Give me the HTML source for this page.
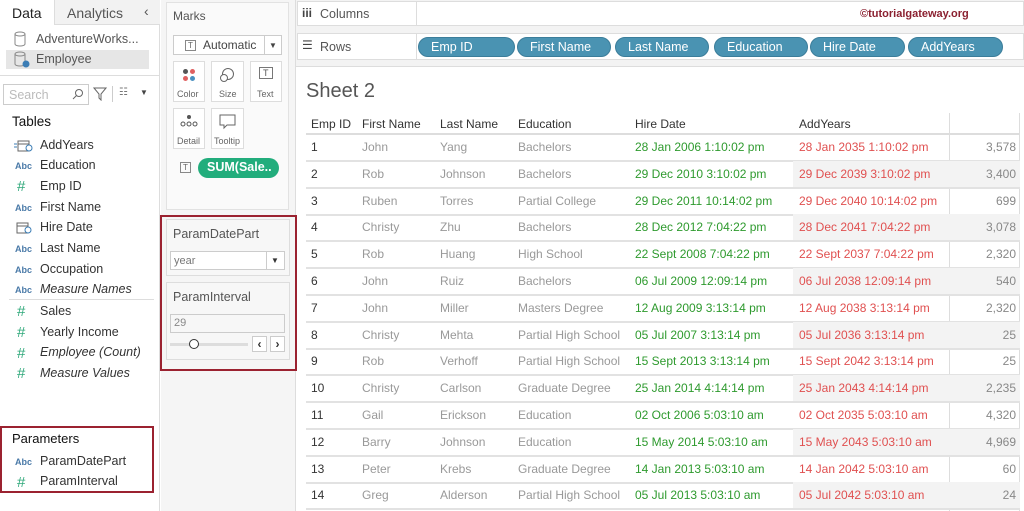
<!DOCTYPE html>
<html><head><meta charset="utf-8"><style>
*{box-sizing:border-box;margin:0;padding:0}
body{width:1024px;height:511px;overflow:hidden;background:#fff;font-family:"Liberation Sans",sans-serif;position:relative;color:#333}
.a{position:absolute;white-space:nowrap}
.f{font-size:12.5px;color:#333}
.ic{font-size:9px;color:#4a7aa8;font-weight:bold}
.hs{color:#2fa87a;font-size:15px}
.pill{position:absolute;top:37px;height:20px;border-radius:10px;background:#4a93b2;border:1px solid #3b7d9a;color:#fff;font-size:12.5px;padding:2px 0 0 12px}
.cell{position:absolute;font-size:12px;white-space:nowrap}
.g{color:#999}.gr{color:#2e9a2e}.rd{color:#e05050}.n{color:#888;text-align:right;width:60px}
</style></head><body>
<div class="a" style="left:0;top:0;width:160px;height:511px;background:#fff;border-right:1px solid #ddd"></div>
<div class="a" style="left:54px;top:0;width:106px;height:25px;background:#f2f2f2;border-bottom:1px solid #ddd;border-left:1px solid #ddd"></div>
<div class="a" style="left:12px;top:5px;font-size:14px;color:#222">Data</div>
<div class="a" style="left:67px;top:5px;font-size:14px;color:#555">Analytics</div>
<div class="a" style="left:144px;top:3px;font-size:14px;color:#555">&lsaquo;</div>
<svg class="a" style="left:14px;top:31px" width="12" height="16"><ellipse cx="6" cy="3" rx="5" ry="2" fill="none" stroke="#888"/><path d="M1 3v10a5 2 0 0 0 10 0V3" fill="none" stroke="#888"/></svg>
<div class="a f" style="left:36px;top:32px;color:#555">AdventureWorks...</div>
<div class="a" style="left:6px;top:50px;width:143px;height:19px;background:#e6e6e6"></div>
<svg class="a" style="left:14px;top:51px" width="16" height="18"><ellipse cx="6" cy="3" rx="5" ry="2" fill="none" stroke="#888"/><path d="M1 3v10a5 2 0 0 0 10 0V3" fill="none" stroke="#888"/><circle cx="12" cy="13" r="3.5" fill="#3b7db5"/></svg>
<div class="a f" style="left:36px;top:52px;color:#555">Employee</div>
<div class="a" style="left:0;top:75px;width:160px;border-top:1px solid #ddd"></div>
<div class="a" style="left:3px;top:84px;width:86px;height:21px;border:1px solid #ccc;background:#fff"></div>
<div class="a" style="left:9px;top:88px;font-size:12.5px;color:#bbb">Search</div>
<svg class="a" style="left:72px;top:88px" width="12" height="12"><circle cx="7" cy="5" r="3.5" fill="none" stroke="#666"/><path d="M4.5 7.5L1 11" stroke="#666"/></svg>
<svg class="a" style="left:93px;top:87px" width="14" height="14"><path d="M1 1h12L8 7v6L6 11V7z" fill="none" stroke="#666"/></svg>
<div class="a" style="left:112px;top:86px;height:16px;border-left:1px solid #ccc"></div>
<div class="a" style="left:119px;top:87px;font-size:10px;color:#777">&#9783;</div>
<div class="a" style="left:140px;top:88px;font-size:8px;color:#444">&#9660;</div>
<div class="a" style="left:12px;top:114px;font-size:13.5px;color:#111">Tables</div>
<svg class="a" style="left:14px;top:138px" width="20" height="14"><path d="M4 3h11v10H4z M4 6h11" fill="none" stroke="#666"/><circle cx="15" cy="10" r="3" fill="#fff" stroke="#3b7db5"/><path d="M0 6h3M0 9h3" stroke="#3b7db5"/></svg>
<div class="a f" style="left:40px;top:138px">AddYears</div>
<div class="a ic" style="left:15px;top:161px">Abc</div><div class="a f" style="left:40px;top:158px">Education</div>
<div class="a hs" style="left:17px;top:178px">#</div><div class="a f" style="left:40px;top:179px">Emp ID</div>
<div class="a ic" style="left:15px;top:203px">Abc</div><div class="a f" style="left:40px;top:200px">First Name</div>
<svg class="a" style="left:16px;top:220px" width="16" height="14"><path d="M1 3h11v10H1z M1 6h11" fill="none" stroke="#666"/><circle cx="12" cy="10" r="3" fill="#fff" stroke="#3b7db5"/></svg>
<div class="a f" style="left:40px;top:220px">Hire Date</div>
<div class="a ic" style="left:15px;top:244px">Abc</div><div class="a f" style="left:40px;top:241px">Last Name</div>
<div class="a ic" style="left:15px;top:265px">Abc</div><div class="a f" style="left:40px;top:262px">Occupation</div>
<div class="a ic" style="left:15px;top:285px">Abc</div><div class="a f" style="left:40px;top:282px;font-style:italic">Measure Names</div>
<div class="a" style="left:9px;top:299px;width:145px;border-top:1px solid #ddd"></div>
<div class="a hs" style="left:17px;top:303px">#</div><div class="a f" style="left:40px;top:304px">Sales</div>
<div class="a hs" style="left:17px;top:324px">#</div><div class="a f" style="left:40px;top:325px">Yearly Income</div>
<div class="a hs" style="left:17px;top:345px">#</div><div class="a f" style="left:40px;top:345px;font-style:italic">Employee (Count)</div>
<div class="a hs" style="left:17px;top:365px">#</div><div class="a f" style="left:40px;top:366px;font-style:italic">Measure Values</div>
<div class="a" style="left:0;top:426px;width:154px;height:67px;border:2px solid #9b2230"></div>
<div class="a" style="left:12px;top:431px;font-size:13px;color:#111">Parameters</div>
<div class="a ic" style="left:15px;top:457px">Abc</div><div class="a f" style="left:40px;top:454px">ParamDatePart</div>
<div class="a hs" style="left:17px;top:474px">#</div><div class="a f" style="left:40px;top:474px">ParamInterval</div>

<div class="a" style="left:161px;top:0;width:135px;height:511px;background:#f5f5f5;border-right:1px solid #ddd"></div>
<div class="a" style="left:166px;top:2px;width:123px;height:208px;background:#fafafa;border:1px solid #e2e2e2"></div>
<div class="a" style="left:173px;top:9px;font-size:12px;color:#555">Marks</div>
<div class="a" style="left:173px;top:35px;width:109px;height:20px;background:#fff;border:1px solid #ccc"></div>
<div class="a" style="left:264px;top:35px;height:20px;border-left:1px solid #ccc"></div>
<div class="a" style="left:185px;top:40px;font-size:8px;border:1px solid #888;padding:0 2px;color:#666">T</div>
<div class="a" style="left:203px;top:38px;font-size:12px;color:#444">Automatic</div>
<div class="a" style="left:269px;top:41px;font-size:8px;color:#444">&#9660;</div>
<div class="a" style="left:173px;top:61px;width:32px;height:41px;border:1px solid #ddd;background:#fff"></div>
<div class="a" style="left:211px;top:61px;width:33px;height:41px;border:1px solid #ddd;background:#fff"></div>
<div class="a" style="left:250px;top:61px;width:32px;height:41px;border:1px solid #ddd;background:#fff"></div>
<div class="a" style="left:173px;top:108px;width:32px;height:41px;border:1px solid #ddd;background:#fff"></div>
<div class="a" style="left:211px;top:108px;width:33px;height:41px;border:1px solid #ddd;background:#fff"></div>
<svg class="a" style="left:182px;top:68px" width="14" height="14"><circle cx="3.5" cy="3.5" r="2.5" fill="#555"/><circle cx="10.5" cy="3.5" r="2.5" fill="#e06060"/><circle cx="3.5" cy="10.5" r="2.5" fill="#e06060"/><circle cx="10.5" cy="10.5" r="2.5" fill="#4a90c0"/></svg>
<svg class="a" style="left:219px;top:67px" width="16" height="16"><circle cx="9" cy="7" r="5.5" fill="none" stroke="#666"/><circle cx="5" cy="11" r="3.5" fill="#fff" stroke="#666"/></svg>
<div class="a" style="left:259px;top:67px;font-size:9px;border:1px solid #777;padding:0 3px;color:#555">T</div>
<div class="a" style="left:177px;top:89px;font-size:9px;color:#666">Color</div>
<div class="a" style="left:219px;top:89px;font-size:9px;color:#666">Size</div>
<div class="a" style="left:257px;top:89px;font-size:9px;color:#666">Text</div>
<svg class="a" style="left:179px;top:114px" width="20" height="14"><circle cx="10" cy="3" r="2" fill="#555"/><circle cx="4" cy="10" r="2" fill="none" stroke="#555"/><circle cx="10" cy="10" r="2" fill="none" stroke="#555"/><circle cx="16" cy="10" r="2" fill="none" stroke="#555"/></svg>
<svg class="a" style="left:219px;top:114px" width="18" height="16"><path d="M1 1h15v10H8l-3 3v-3H1z" fill="none" stroke="#666"/></svg>
<div class="a" style="left:177px;top:136px;font-size:9px;color:#666">Detail</div>
<div class="a" style="left:214px;top:136px;font-size:9px;color:#666">Tooltip</div>
<div class="a" style="left:180px;top:162px;font-size:8px;border:1px solid #888;padding:0 2px;color:#666">T</div>
<div class="a" style="left:198px;top:158px;width:81px;height:20px;border-radius:10px;background:#22ad7c;color:#fff;font-size:12.5px;font-weight:bold;padding:2px 0 0 9px">SUM(Sale..</div>
<div class="a" style="left:160px;top:215px;width:137px;height:156px;border:2px solid #9b2230"></div>
<div class="a" style="left:166px;top:219px;width:124px;height:57px;border:1px solid #ddd;background:#f7f7f7"></div>
<div class="a" style="left:173px;top:227px;font-size:12.5px;color:#555">ParamDatePart</div>
<div class="a" style="left:170px;top:251px;width:115px;height:19px;border:1px solid #ccc;background:#fff"></div>
<div class="a" style="left:266px;top:251px;height:19px;border-left:1px solid #ccc"></div>
<div class="a" style="left:174px;top:255px;font-size:11px;color:#777">year</div>
<div class="a" style="left:271px;top:256px;font-size:8px;color:#333">&#9660;</div>
<div class="a" style="left:166px;top:282px;width:124px;height:78px;border:1px solid #ddd;background:#f7f7f7"></div>
<div class="a" style="left:173px;top:290px;font-size:12.5px;color:#555">ParamInterval</div>
<div class="a" style="left:170px;top:314px;width:115px;height:19px;border:1px solid #ccc;background:#f7f7f7"></div>
<div class="a" style="left:174px;top:317px;font-size:11px;color:#888">29</div>
<div class="a" style="left:170px;top:343px;width:78px;height:3px;background:#ddd"></div>
<div class="a" style="left:189px;top:339px;width:10px;height:10px;border-radius:50%;border:1px solid #333;background:#fff"></div>
<div class="a" style="left:252px;top:336px;width:15px;height:16px;border:1px solid #ccc;background:#fff;font-size:12px;font-weight:bold;text-align:center;line-height:14px">&lsaquo;</div>
<div class="a" style="left:270px;top:336px;width:15px;height:16px;border:1px solid #ccc;background:#fff;font-size:12px;font-weight:bold;text-align:center;line-height:14px">&rsaquo;</div>

<div class="a" style="left:296px;top:0;width:728px;height:67px;background:#f3f3f3"></div>
<div class="a" style="left:297px;top:1px;width:727px;height:25px;background:#fff;border:1px solid #ddd"></div>
<div class="a" style="left:416px;top:1px;height:25px;border-left:1px solid #ddd"></div>
<div class="a" style="left:302px;top:6px;font-size:12px;font-weight:bold;color:#444">iii</div>
<div class="a" style="left:320px;top:7px;font-size:12.5px;color:#555">Columns</div>
<div class="a" style="left:860px;top:8px;font-size:11px;font-weight:bold;color:#8b2030">©tutorialgateway.org</div>
<div class="a" style="left:297px;top:33px;width:727px;height:27px;background:#fff;border:1px solid #ddd"></div>
<div class="a" style="left:416px;top:33px;height:27px;border-left:1px solid #ddd"></div>
<div class="a" style="left:302px;top:38px;font-size:12px;color:#444">&#9776;</div>
<div class="a" style="left:320px;top:40px;font-size:12.5px;color:#555">Rows</div>
<div class="pill" style="left:418px;width:97px">Emp ID</div>
<div class="pill" style="left:517px;width:94px">First Name</div>
<div class="pill" style="left:615px;width:94px">Last Name</div>
<div class="pill" style="left:714px;width:94px">Education</div>
<div class="pill" style="left:810px;width:95px">Hire Date</div>
<div class="pill" style="left:908px;width:95px">AddYears</div>
<div class="a" style="left:296px;top:66px;width:728px;border-top:1px solid #ddd"></div>

<div class="a" style="left:306px;top:80px;font-size:20px;color:#555">Sheet 2</div>
<div class="a" style="left:949px;top:113px;height:398px;border-left:1px solid #ddd"></div>
<div class="a" style="left:1019px;top:113px;height:398px;border-left:1px solid #ddd"></div>
<div id="tb"></div>
<script>
var H=[["Emp ID",311],["First Name",362],["Last Name",440],["Education",518],["Hire Date",635],["AddYears",799]];
var R=[["1","John","Yang","Bachelors","28 Jan 2006 1:10:02 pm","28 Jan 2035 1:10:02 pm","3,578"],
["2","Rob","Johnson","Bachelors","29 Dec 2010 3:10:02 pm","29 Dec 2039 3:10:02 pm","3,400"],
["3","Ruben","Torres","Partial College","29 Dec 2011 10:14:02 pm","29 Dec 2040 10:14:02 pm","699"],
["4","Christy","Zhu","Bachelors","28 Dec 2012 7:04:22 pm","28 Dec 2041 7:04:22 pm","3,078"],
["5","Rob","Huang","High School","22 Sept 2008 7:04:22 pm","22 Sept 2037 7:04:22 pm","2,320"],
["6","John","Ruiz","Bachelors","06 Jul 2009 12:09:14 pm","06 Jul 2038 12:09:14 pm","540"],
["7","John","Miller","Masters Degree","12 Aug 2009 3:13:14 pm","12 Aug 2038 3:13:14 pm","2,320"],
["8","Christy","Mehta","Partial High School","05 Jul 2007 3:13:14 pm","05 Jul 2036 3:13:14 pm","25"],
["9","Rob","Verhoff","Partial High School","15 Sept 2013 3:13:14 pm","15 Sept 2042 3:13:14 pm","25"],
["10","Christy","Carlson","Graduate Degree","25 Jan 2014 4:14:14 pm","25 Jan 2043 4:14:14 pm","2,235"],
["11","Gail","Erickson","Education","02 Oct 2006 5:03:10 am","02 Oct 2035 5:03:10 am","4,320"],
["12","Barry","Johnson","Education","15 May 2014 5:03:10 am","15 May 2043 5:03:10 am","4,969"],
["13","Peter","Krebs","Graduate Degree","14 Jan 2013 5:03:10 am","14 Jan 2042 5:03:10 am","60"],
["14","Greg","Alderson","Partial High School","05 Jul 2013 5:03:10 am","05 Jul 2042 5:03:10 am","24"]];
var s="";
H.forEach(function(h){s+='<div class="cell" style="left:'+h[1]+'px;top:117px;color:#333">'+h[0]+'</div>'});
s+='<div class="a" style="left:306px;top:133px;width:714px;border-top:2px solid #ddd"></div>';
R.forEach(function(r,i){var t=134+i*26.8;
if(i%2==1)s+='<div class="a" style="left:793px;top:'+t+'px;width:227px;height:26px;background:#f3f3f3"></div>';
var y=t+6;
s+='<div class="cell" style="left:311px;top:'+y+'px;color:#333">'+r[0]+'</div>';
s+='<div class="cell g" style="left:362px;top:'+y+'px">'+r[1]+'</div>';
s+='<div class="cell g" style="left:440px;top:'+y+'px">'+r[2]+'</div>';
s+='<div class="cell g" style="left:518px;top:'+y+'px">'+r[3]+'</div>';
s+='<div class="cell gr" style="left:635px;top:'+y+'px">'+r[4]+'</div>';
s+='<div class="cell rd" style="left:799px;top:'+y+'px">'+r[5]+'</div>';
s+='<div class="cell n" style="left:956px;top:'+y+'px">'+r[6]+'</div>';
s+='<div class="a" style="left:306px;top:'+(t+26)+'px;width:714px;border-top:2px solid #e2e2e2"></div>';});
document.getElementById("tb").innerHTML=s;
</script>
</body></html>
